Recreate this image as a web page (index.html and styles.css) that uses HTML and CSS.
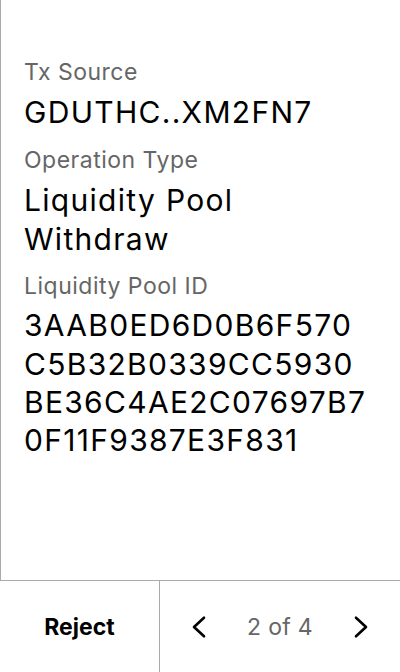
FILE: index.html
```html
<!DOCTYPE html>
<html>
<head>
<meta charset="utf-8">
<link rel="stylesheet" href="styles.css">
</head>
<body>
<div class="screen">
  <main class="content">
    <div class="field">
      <div class="label">Tx Source</div>
      <div class="value">GDUTHC..XM2FN7</div>
    </div>
    <div class="field">
      <div class="label">Operation Type</div>
      <div class="value">Liquidity Pool<br>Withdraw</div>
    </div>
    <div class="field field-hex">
      <div class="label">Liquidity Pool ID</div>
      <div class="value">3AAB0ED6D0B6F570<br>C5B32B0339CC5930<br>BE36C4AE2C07697B7<br>0F11F9387E3F831</div>
    </div>
  </main>
  <footer class="footer">
    <div class="reject">Reject</div>
    <div class="pager">
      <svg class="chev" width="16" height="24" viewBox="0 0 16 24"><path d="M13 2.75 L3 12 L13 21.25" fill="none" stroke="#000" stroke-width="2.6" stroke-linecap="round" stroke-linejoin="round"/></svg>
      <span class="count">2 of 4</span>
      <svg class="chev" width="16" height="24" viewBox="0 0 16 24"><path d="M3 2.75 L13 12 L3 21.25" fill="none" stroke="#000" stroke-width="2.6" stroke-linecap="round" stroke-linejoin="round"/></svg>
    </div>
  </footer>
</div>
</body>
</html>
```
FILE: styles.css
```css
html, body {
  margin: 0;
  padding: 0;
  background: #fff;
}
body {
  font-family: Inter, "Noto Sans", sans-serif;
  color: #000;
}
.screen {
  width: 400px;
  height: 672px;
  display: flex;
  flex-direction: column;
}
.content {
  flex: 1;
  border-left: 1px solid #aaa;
  padding: 57.5px 20px 0 23px;
  display: flex;
  flex-direction: column;
  gap: 14.35px;
}
.field {
  display: flex;
  flex-direction: column;
  gap: 7.65px;
}
.field-hex {
  gap: 6px;
}
.label {
  font-size: 23px;
  line-height: 28px;
  letter-spacing: 0.5px;
  color: #666;
}
.value {
  font-size: 30px;
  line-height: 38.3px;
  letter-spacing: 1.3px;
}
.footer {
  height: 91px;
  border-top: 1px solid #aaa;
  display: grid;
  grid-template-columns: 160px 1fr;
}
.reject {
  display: flex;
  align-items: center;
  justify-content: center;
  font-size: 23px;
  font-weight: 700;
  border-right: 1px solid #aaa;
}
.pager {
  display: flex;
  align-items: center;
  justify-content: space-between;
  padding: 0 31px;
}
.count {
  font-size: 23px;
  letter-spacing: 0.3px;
  color: #666;
}
.chev {
  display: block;
}
```
